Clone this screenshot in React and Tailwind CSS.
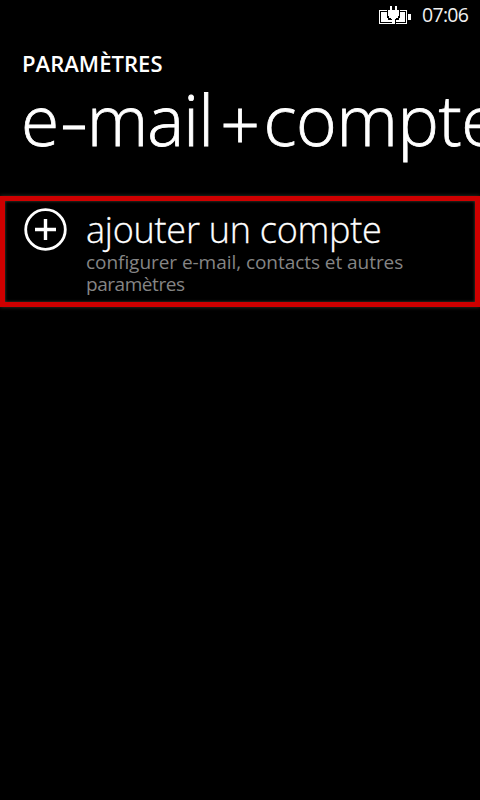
function BatteryIcon() {
  return (
    <svg className="block h-[20px] w-[32px]" viewBox="0 0 32 20" shapeRendering="crispEdges">
      <path fill="#fff" d="M0 5h28v14H0zM29 9h3v6h-3z" />
      <path fill="#000" d="M1 6h26v12H1z" />
      <path fill="#fff" d="M2 7h24v10H2z" />
      <path fill="#000" d="M8 5h13v8h-1v2h-3v4h-4v-4H9v-2H8z" />
      <path fill="#fff" d="M11 1h2v4h3V1h2v4h2v6h-1v2h-2v1h-1v5h-3v-5h-1v-1h-2v-2H9V5h2z" />
    </svg>
  );
}

function AddIcon() {
  return (
    <svg className="mt-[6px] block h-[44px] w-[44px] shrink-0" viewBox="0 0 44 44" fill="none" stroke="#fff">
      <circle cx="21.5" cy="22.5" r="19.8" strokeWidth="2.8" />
      <path d="M11 22.5h21M21.5 12v21" strokeWidth="3.4" />
    </svg>
  );
}

export default function App() {
  return (
    <main className="flex h-[800px] w-[480px] flex-col overflow-hidden bg-black font-['Open_Sans','Noto_Sans',sans-serif] text-white">
      <header className="flex h-[32px] items-start justify-end pr-[11px]">
        <div className="mr-[11px] mt-[5px]"><BatteryIcon /></div>
        <time className="block h-[30px] w-[47px] whitespace-nowrap text-[19.5px] leading-[30px] tracking-[-0.7px] text-[#f0f0f0]">07:06</time>
      </header>
      <h2 className="ml-[22px] mt-[18px] h-[28px] whitespace-nowrap text-[22px] font-semibold leading-[26px] tracking-[0.05px]">PARAMÈTRES</h2>
      <h1 className="ml-[21px] h-[118px] whitespace-nowrap text-[69.5px] font-light leading-[83px] tracking-[-0.4px] [-webkit-text-stroke:0.8px_white]">
        e<span className="ml-[1px] mr-[5px] inline-block origin-left scale-x-125">-</span><span className="tracking-[-0.8px]">mail</span><span className="relative top-[4px] ml-[7px] mr-[4px] inline-block">+</span>comptes
      </h1>
      <section className="flex h-[111px] shrink-0 border-[5px] border-[#ce0000] pl-[19px] shadow-[0_0_4px_#39392c,inset_0_0_3px_#4a4a3c]">
        <AddIcon />
        <div className="ml-[18px] pt-[4px]">
          <h3 className="h-[46px] whitespace-nowrap text-[36px] font-light leading-[50px] tracking-[-0.25px] [-webkit-text-stroke:0.3px_white]">ajouter un compte</h3>
          <p className="w-[340px] text-[19px] leading-[22px] tracking-[-0.05px] text-[#858585]">configurer e-mail, contacts et autres<br /><span className="tracking-[-0.45px]">paramètres</span></p>
        </div>
      </section>
    </main>
  );
}
